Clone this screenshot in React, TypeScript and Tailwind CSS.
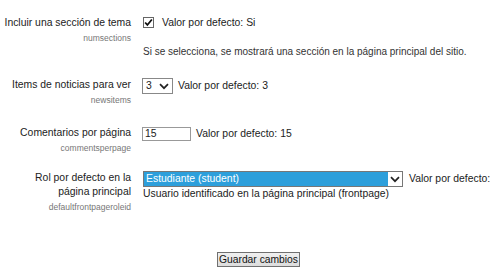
import { ReactNode } from "react";

function Chevron() {
  return (
    <svg width="10" height="7" viewBox="0 0 10 7" className="shrink-0">
      <path d="M1 1.2 L5 5.2 L9 1.2" fill="none" stroke="#222" strokeWidth="1.7" />
    </svg>
  );
}

function Row({ label, name, children, className = "" }: { label: ReactNode; name: string; children: ReactNode; className?: string }) {
  return (
    <div className={`flex ${className}`}>
      <div className="w-[131px] shrink-0 text-right">
        <div className="leading-[14px]">{label}</div>
        <div className="mt-[3px] text-[8.5px] leading-[10px] text-[#777]">{name}</div>
      </div>
      <div className="pl-[12px]">{children}</div>
    </div>
  );
}

export default function App() {
  return (
    <div
      className="h-[276px] w-[500px] overflow-hidden bg-white pt-[16px] text-[10.4px] text-[#222]"
      style={{ fontFamily: '"Liberation Sans", Arial, sans-serif' }}
    >
      <Row label="Incluir una sección de tema" name="numsections">
        <div className="flex h-[13px] items-center">
          <span className="flex h-[11px] w-[11px] items-center justify-center border border-[#666] bg-white">
            <svg width="9" height="9" viewBox="0 0 8 8">
              <path d="M1 4 L3 6.2 L7 1.3" fill="none" stroke="#111" strokeWidth="1.6" />
            </svg>
          </span>
          <span className="ml-[8px] leading-[13px]">Valor por defecto: Si</span>
        </div>
        <div className="mt-[16px] whitespace-nowrap text-[10px] leading-[13px] text-[#333]">
          Si se selecciona, se mostrará una sección en la página principal del sitio.
        </div>
      </Row>

      <Row label="Items de noticias para ver" name="newsitems" className="mt-[20px]">
        <div className="-ml-[1px] flex items-center">
          <span className="flex h-[16px] w-[31px] items-center justify-between border border-[#888] pl-[3px] pr-[3px]">
            <span>3</span>
            <Chevron />
          </span>
          <span className="ml-[5px] whitespace-nowrap">Valor por defecto: 3</span>
        </div>
      </Row>

      <Row label="Comentarios por página" name="commentsperpage" className="mt-[21px]">
        <div className="-ml-[1px] flex items-center">
          <span className="flex h-[14px] w-[49px] items-center border border-[#999] px-[2px] leading-[12px]">15</span>
          <span className="ml-[5px] whitespace-nowrap">Valor por defecto: 15</span>
        </div>
      </Row>

      <Row
        label={
          <>
            Rol por defecto en la
            <br />
            página principal
          </>
        }
        name="defaultfrontpageroleid"
        className="mt-[18px]"
      >
        <div className="flex items-center">
          <span className="flex h-[16px] w-[260px] items-stretch border border-[#777]">
            <span className="flex flex-1 items-center bg-[#2d9fdb] pl-[2px] text-white">Estudiante (student)</span>
            <span className="flex w-[14px] items-center justify-center bg-white">
              <Chevron />
            </span>
          </span>
          <span className="ml-[6px] whitespace-nowrap">Valor por defecto:</span>
        </div>
        <div className="leading-[14px]">Usuario identificado en la página principal (frontpage)</div>
      </Row>

      <div className="mt-[40px] flex justify-center pl-[17px]">
        <button className="h-[15px] border border-[#707070] bg-gradient-to-b from-[#f0f0f0] to-[#dcdcdc] px-[1px] text-[10.3px] leading-[13px] text-[#111]">
          Guardar cambios
        </button>
      </div>
    </div>
  );
}
